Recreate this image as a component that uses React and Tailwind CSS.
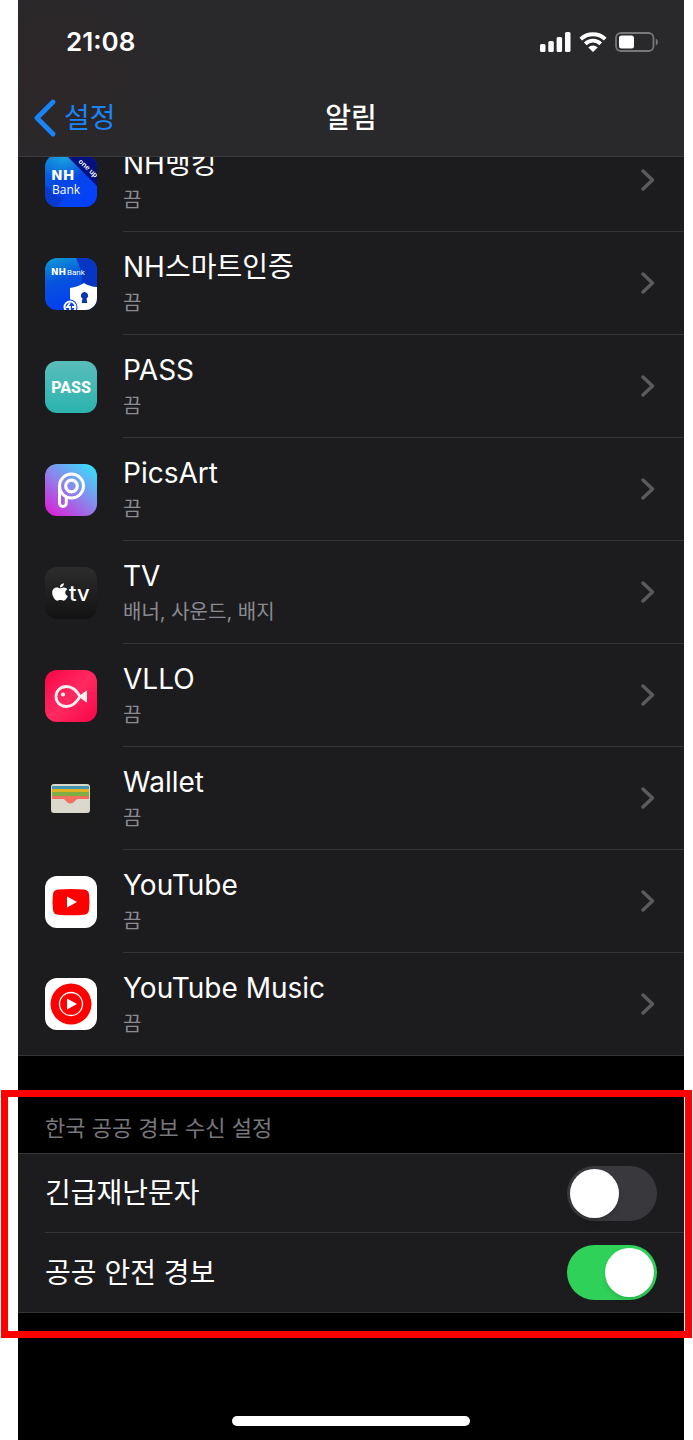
import { useState } from "react";
import { FaApple } from "react-icons/fa";

function NhBankIcon() {
  return (
    <svg viewBox="0 0 52 52" className="size-[52px]" aria-hidden="true">
      <defs>
        <linearGradient id="nhb" x1="0" y1="0" x2="0.8" y2="1">
          <stop offset="0" stopColor="#0a7fdc" />
          <stop offset="0.45" stopColor="#0747e0" />
          <stop offset="1" stopColor="#0340ff" />
        </linearGradient>
        <radialGradient id="nhbGlow" cx="0.38" cy="0" r="0.5">
          <stop offset="0" stopColor="#1aa6e0" />
          <stop offset="1" stopColor="#1aa6e0" stopOpacity="0" />
        </radialGradient>
        <clipPath id="nhbClip"><rect width="52" height="52" rx="12" /></clipPath>
      </defs>
      <g clipPath="url(#nhbClip)">
        <rect width="52" height="52" fill="url(#nhb)" />
        <rect width="52" height="52" fill="url(#nhbGlow)" />
        <path d="M0 30 C6 38 12 42 19 43 Q15 47 13 52 H0 Z" fill="#0a35c4" opacity="0.7" />
        <path d="M21 0 H52 V31 Z" fill="#03107f" />
      </g>
      <text x="6" y="25" fill="#fff" fontFamily="DejaVu Sans" fontWeight="700" fontSize="14">NH</text>
      <text x="7" y="39" fill="#fff" fontFamily="Open Sans" fontWeight="500" fontSize="12">Bank</text>
      <text x="0" y="0" transform="translate(33 7) rotate(43)" fill="#fff" fontFamily="Noto Sans" fontWeight="600" fontSize="7">one up</text>
    </svg>
  );
}

function NhCertIcon() {
  return (
    <svg viewBox="0 0 52 52" className="size-[52px]" aria-hidden="true">
      <defs>
        <linearGradient id="nhc" x1="0.2" y1="0" x2="0.5" y2="1">
          <stop offset="0" stopColor="#0f94d6" />
          <stop offset="0.4" stopColor="#0754dc" />
          <stop offset="1" stopColor="#033cf5" />
        </linearGradient>
        <clipPath id="nhcClip"><rect width="52" height="52" rx="12" /></clipPath>
      </defs>
      <g clipPath="url(#nhcClip)">
        <rect width="52" height="52" fill="url(#nhc)" />
        <path d="M31 0 H52 V52 H24 Q46 30 31 0 Z" fill="#0736c4" />
        <path d="M39 25 Q45 29 53 29 V47 Q50 50 47 52 H31 Q25 47 25 40 V30 Q33 29 39 25 Z" fill="#fff" />
        <path d="M39.500 34 a3.600 3.600 0 0 1 2 6.600 L42.300 45 H36.700 L37.500 40.600 a3.600 3.600 0 0 1 2 -6.600 Z" fill="#0a35a8" />
        <circle cx="25" cy="49" r="7.500" fill="#0640e8" />
        <circle cx="25" cy="49" r="5.500" fill="none" stroke="#fff" strokeWidth="2" />
        <path d="M25 45 l-3 4 h3 v3 M27 49 h3" fill="none" stroke="#fff" strokeWidth="1.800" />
      </g>
      <text x="6" y="17" fill="#fff" fontFamily="DejaVu Sans" fontWeight="700" fontSize="9">NH</text>
      <text x="22" y="17" fill="#fff" fontFamily="Roboto" fontWeight="400" fontSize="8">Bank</text>
    </svg>
  );
}

function PassIcon() {
  return (
    <svg viewBox="0 0 52 52" className="size-[52px]" aria-hidden="true">
      <defs>
        <linearGradient id="pass" x1="0" y1="0" x2="0" y2="1">
          <stop offset="0" stopColor="#5abdb9" />
          <stop offset="1" stopColor="#2bb3b0" />
        </linearGradient>
      </defs>
      <rect width="52" height="52" rx="12" fill="url(#pass)" />
      <text x="26" y="32" textAnchor="middle" fill="#fff" fontFamily="Roboto" fontWeight="800" fontSize="16">PASS</text>
    </svg>
  );
}

function PicsArtIcon() {
  return (
    <svg viewBox="0 0 52 52" className="size-[52px]" aria-hidden="true">
      <defs>
        <linearGradient id="pics" x1="0.1" y1="1" x2="0.9" y2="0">
          <stop offset="0" stopColor="#dc1fd6" />
          <stop offset="0.5" stopColor="#8c84ec" />
          <stop offset="1" stopColor="#36e0fc" />
        </linearGradient>
      </defs>
      <rect width="52" height="52" rx="12" fill="url(#pics)" />
      <g fill="none" stroke="#fff" strokeWidth="3">
        <circle cx="26.500" cy="22" r="12" />
        <circle cx="26.500" cy="22" r="5.800" strokeWidth="3.200" />
        <path d="M14.500 22 V39 a3.400 3.400 0 0 0 6.800 0 V33" />
      </g>
    </svg>
  );
}

function TvIcon() {
  return (
    <svg viewBox="0 0 52 52" className="size-[52px]" aria-hidden="true">
      <defs>
        <linearGradient id="tv" x1="0" y1="0" x2="0" y2="1">
          <stop offset="0" stopColor="#2d2d2d" />
          <stop offset="1" stopColor="#121212" />
        </linearGradient>
      </defs>
      <rect width="52" height="52" rx="12" fill="url(#tv)" />
      <svg x="7" y="15" width="16" height="20" viewBox="0 0 384 512" preserveAspectRatio="none">
        <FaApple size="512" x="-64" color="#fff" />
      </svg>
      <text x="24" y="34" fill="#fff" fontFamily="Inter" fontWeight="500" fontSize="22">tv</text>
    </svg>
  );
}

function VlloIcon() {
  return (
    <svg viewBox="0 0 52 52" className="size-[52px]" aria-hidden="true">
      <defs>
        <linearGradient id="vllo" x1="0" y1="0" x2="1" y2="1">
          <stop offset="0" stopColor="#f80448" />
          <stop offset="0.5" stopColor="#ff2a60" />
          <stop offset="1" stopColor="#f80448" />
        </linearGradient>
      </defs>
      <rect width="52" height="52" rx="12" fill="url(#vllo)" />
      <path d="M35 26.500 C31 33.500 26 36.500 21.500 36.500 C15 36.500 11 32 11 26.500 C11 21 15 16.500 21.500 16.500 C26 16.500 31 19.500 35 26.500 Z" fill="none" stroke="#fff0f3" strokeWidth="2.800" />
      <path d="M34 26.500 L41.500 21 V32 Z" fill="#fff0f3" stroke="#fff0f3" strokeWidth="1" strokeLinejoin="round" />
      <circle cx="18" cy="24.500" r="2.100" fill="#fff0f3" />
    </svg>
  );
}

function WalletIcon() {
  return (
    <svg viewBox="0 0 52 52" className="size-[52px]" aria-hidden="true">
      <defs>
        <clipPath id="walletClip"><rect x="7" y="12" width="37" height="27" rx="2" /></clipPath>
      </defs>
      <rect width="52" height="52" rx="12" fill="#1c1c1c" />
      <rect x="6" y="11" width="39" height="29" rx="3" fill="#d9d6ca" />
      <g clipPath="url(#walletClip)">
        <rect x="7" y="13" width="37" height="4" fill="#4595b2" />
        <rect x="7" y="16" width="37" height="4" fill="#e3b01f" />
        <rect x="7" y="19" width="37" height="4" fill="#7fae42" />
        <rect x="7" y="23" width="37" height="8" fill="#f2705f" />
        <path d="M7 26 H18 C21 26 21 30.500 25.500 30.500 C30 30.500 30 26 33 26 H44 V40 H7 Z" fill="#dbd8cd" />
      </g>
    </svg>
  );
}

function YouTubeIcon() {
  return (
    <svg viewBox="0 0 52 52" className="size-[52px]" aria-hidden="true">
      <rect width="52" height="52" rx="12" fill="#fff" />
      <path d="M13 13.500 Q26 12.300 39 13.500 Q43.500 14 44 18 Q45 26 44 34 Q43.500 38 39 38.700 Q26 40 13 38.700 Q8.500 38 8 34 Q7 26 8 18 Q8.500 14 13 13.500 Z" fill="#fe0000" />
      <path d="M22 20.500 L32 26 L22 31.500 Z" fill="#fff" />
    </svg>
  );
}

function YouTubeMusicIcon() {
  return (
    <svg viewBox="0 0 52 52" className="size-[52px]" aria-hidden="true">
      <rect width="52" height="52" rx="12" fill="#fff" />
      <circle cx="26" cy="26" r="20.500" fill="#fe0000" />
      <circle cx="26" cy="26" r="11.500" fill="none" stroke="#fff" strokeWidth="1.300" />
      <path d="M22 20.500 L32 26 L22 31.500 Z" fill="#fff" />
    </svg>
  );
}

const apps = [
  { name: "NH뱅킹", status: "끔", Icon: NhBankIcon },
  { name: "NH스마트인증", status: "끔", Icon: NhCertIcon },
  { name: "PASS", status: "끔", Icon: PassIcon },
  { name: "PicsArt", status: "끔", Icon: PicsArtIcon },
  { name: "TV", status: "배너, 사운드, 배지", Icon: TvIcon },
  { name: "VLLO", status: "끔", Icon: VlloIcon },
  { name: "Wallet", status: "끔", Icon: WalletIcon },
  { name: "YouTube", status: "끔", Icon: YouTubeIcon },
  { name: "YouTube Music", status: "끔", Icon: YouTubeMusicIcon },
];

function StatusBar() {
  return (
    <div className="flex h-20 items-center justify-between pt-1 pr-[25px] pl-12">
      <time className="text-[26px] leading-8 font-semibold">21:08</time>
      <div className="flex items-center gap-2">
        <svg viewBox="0 0 31 20" className="h-5 w-[31px]" fill="#fff" aria-hidden="true">
          <rect x="0" y="12" width="5.500" height="8" rx="1.500" />
          <rect x="8.300" y="9" width="5.500" height="11" rx="1.500" />
          <rect x="16.600" y="5" width="5.500" height="15" rx="1.500" />
          <rect x="25" y="0" width="5.500" height="20" rx="1.500" />
        </svg>
        <svg viewBox="0 0 28 20" className="h-5 w-7" aria-hidden="true">
          <g fill="none" stroke="#fff" strokeWidth="3.800">
            <path d="M1.800 7.200 A17.500 17.500 0 0 1 26.200 7.200" />
            <path d="M6.300 11.800 A11 11 0 0 1 21.700 11.800" />
          </g>
          <path d="M14 20 L9.300 15.400 A6.700 6.700 0 0 1 18.700 15.400 Z" fill="#fff" />
        </svg>
        <svg viewBox="0 0 44 20" className="h-5 w-11" aria-hidden="true">
          <rect x="1" y="1" width="37.500" height="18" rx="5" fill="none" stroke="#777779" strokeWidth="1.800" />
          <rect x="4" y="3.500" width="15" height="13" rx="2.500" fill="#fff" />
          <path d="M40.800 6.500 Q43 7.800 43 10 Q43 12.200 40.800 13.500 Z" fill="#777779" />
        </svg>
      </div>
    </div>
  );
}

function NavBar() {
  return (
    <div className="grid h-[76px] grid-cols-[1fr_auto_1fr] items-center px-4">
      <a href="#settings" className="flex items-center gap-2 text-[28px] leading-10 text-[#1a84f5]">
        <svg viewBox="0 0 22 38" className="h-[38px] w-[22px]" fill="none" stroke="currentColor" strokeWidth="4.800" strokeLinecap="round" strokeLinejoin="round" aria-hidden="true">
          <path d="M19 3 L3 19 L19 35" />
        </svg>
        설정
      </a>
      <h1 className="text-[28px] leading-10 font-medium">알림</h1>
    </div>
  );
}

function AppRow({ name, status, Icon }) {
  return (
    <li className="group">
      <a href="#app" className="flex items-center pl-[27px]">
        <Icon />
        <div className="ml-[26px] flex flex-1 items-center justify-between border-b border-[#343437] py-[15px] pr-[29px] group-last:border-b-0">
          <div>
            <div className="text-[28px] leading-10">{name}</div>
            <div className="text-[20px] leading-8 text-[#8a8a90]">{status}</div>
          </div>
          <svg viewBox="0 0 14 22" className="h-[22px] w-[14px]" fill="none" stroke="#5b5b5f" strokeWidth="3.400" strokeLinecap="round" strokeLinejoin="round" aria-hidden="true">
            <path d="M2 2 L11.500 11 L2 20" />
          </svg>
        </div>
      </a>
    </li>
  );
}

function ToggleRow({ id, label, defaultChecked, last }) {
  const [on, setOn] = useState(defaultChecked);
  return (
    <div className="pl-[27px]">
      <div className={`flex h-[79px] items-center justify-between pr-[27px] ${last ? "" : "border-b border-[#343437]"}`}>
        <label htmlFor={id} className="text-[28px] leading-10">{label}</label>
        <input
          id={id}
          type="checkbox"
          role="switch"
          checked={on}
          onChange={(e) => setOn(e.target.checked)}
          className="flex h-[55px] w-[90px] appearance-none items-center rounded-full bg-[#39393d] px-[3px] before:size-[49px] before:rounded-full before:bg-white before:shadow-md checked:justify-end checked:bg-[#30d158]"
        />
      </div>
    </div>
  );
}

export default function App() {
  return (
    <div className="min-h-screen bg-white pr-[9px] pl-[18px]">
      <main className="flex min-h-screen flex-col bg-black font-['Inter','Noto_Sans_CJK_KR',sans-serif] text-white">
        <header className="border-b border-[#3a3a3c] bg-[#29292b] bg-[radial-gradient(circle_at_40px_75px,#2d2628,transparent_120px)]">
          <StatusBar />
          <NavBar />
        </header>

        <div className="overflow-hidden border-b border-[#343437] bg-[#1c1c1e]">
          <ul className="-mt-7">
            {apps.map((app) => (
              <AppRow key={app.name} {...app} />
            ))}
          </ul>
        </div>

        <section className="relative mt-[34px] pt-[22px] pb-[25px]">
          <h2 className="px-[27px] pb-[9px] text-[22px] leading-8 text-[#77777c]">한국 공공 경보 수신 설정</h2>
          <div className="border-y border-[#343437] bg-[#1c1c1e]">
            <ToggleRow id="emergency" label="긴급재난문자" defaultChecked={false} />
            <ToggleRow id="safety" label="공공 안전 경보" defaultChecked last />
          </div>
          <div className="pointer-events-none absolute inset-y-0 -right-2 -left-[17px] border-[7px] border-[#fe0000]" aria-hidden="true" />
        </section>

        <div className="mt-auto flex justify-center pb-[14px]">
          <div className="h-[10px] w-[238px] rounded-full bg-white" />
        </div>
      </main>
    </div>
  );
}
